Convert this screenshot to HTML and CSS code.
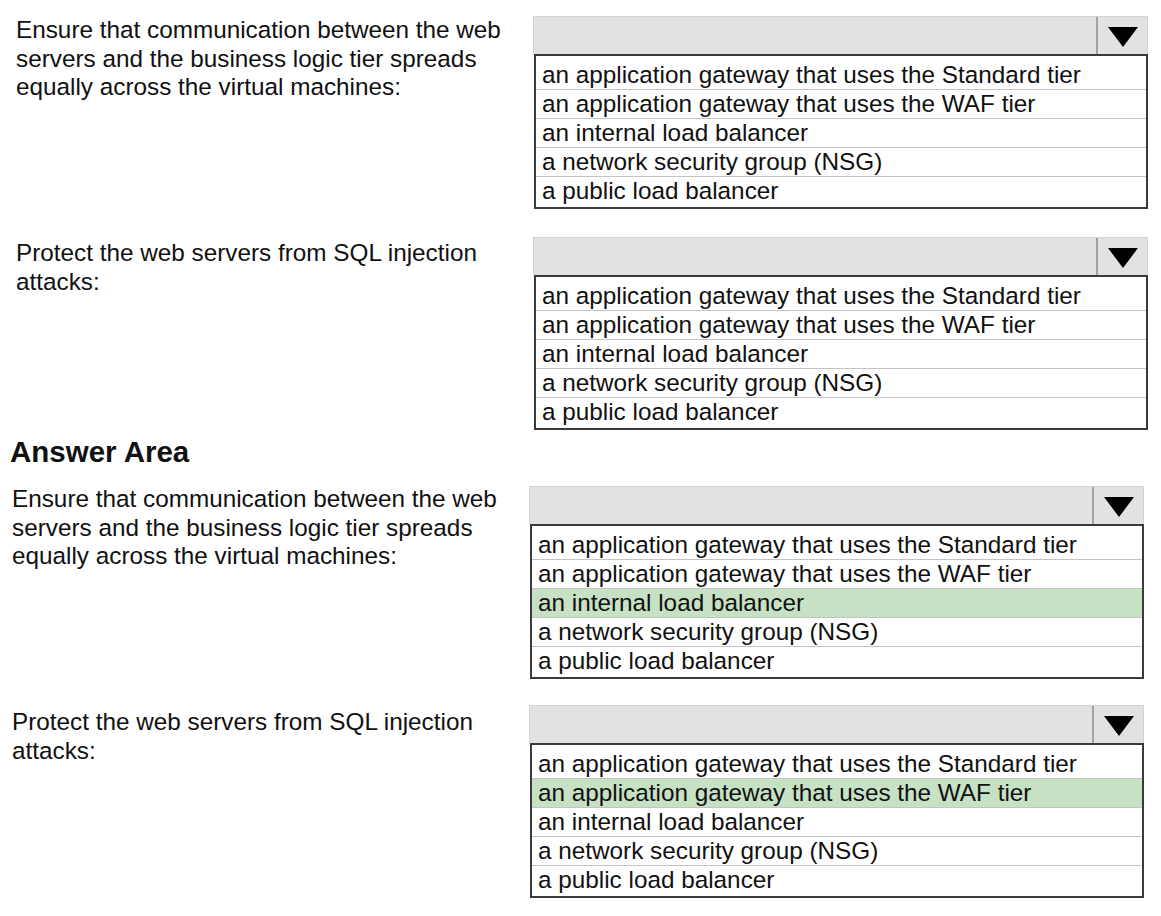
FILE: index.html
```html
<!DOCTYPE html>
<html lang="en">
<head>
<meta charset="utf-8">
<title>Answer Area</title>
<link rel="stylesheet" href="styles.css">
</head>
<body>
<main class="page">
  <section class="area area-question">
    <div class="item item-first">
      <p class="prompt">Ensure that communication between the web servers and the business logic tier spreads equally across the virtual machines:</p>
      <div class="dropdown">
        <div class="select"><span class="select-value"></span><span class="select-arrow"><svg width="30" height="20" viewBox="0 0 30 20"><polygon points="0,0 30,0 15,20" fill="#000"/></svg></span></div>
        <ul class="options">
          <li class="option">an application gateway that uses the Standard tier</li>
          <li class="option">an application gateway that uses the WAF tier</li>
          <li class="option">an internal load balancer</li>
          <li class="option">a network security group (NSG)</li>
          <li class="option">a public load balancer</li>
        </ul>
      </div>
    </div>
    <div class="item item-second">
      <p class="prompt">Protect the web servers from SQL injection attacks:</p>
      <div class="dropdown">
        <div class="select"><span class="select-value"></span><span class="select-arrow"><svg width="30" height="20" viewBox="0 0 30 20"><polygon points="0,0 30,0 15,20" fill="#000"/></svg></span></div>
        <ul class="options">
          <li class="option">an application gateway that uses the Standard tier</li>
          <li class="option">an application gateway that uses the WAF tier</li>
          <li class="option">an internal load balancer</li>
          <li class="option">a network security group (NSG)</li>
          <li class="option">a public load balancer</li>
        </ul>
      </div>
    </div>
  </section>

  <section class="area area-answer">
    <h2 class="heading">Answer Area</h2>
    <div class="item item-first">
      <p class="prompt">Ensure that communication between the web servers and the business logic tier spreads equally across the virtual machines:</p>
      <div class="dropdown">
        <div class="select"><span class="select-value"></span><span class="select-arrow"><svg width="30" height="20" viewBox="0 0 30 20"><polygon points="0,0 30,0 15,20" fill="#000"/></svg></span></div>
        <ul class="options">
          <li class="option">an application gateway that uses the Standard tier</li>
          <li class="option">an application gateway that uses the WAF tier</li>
          <li class="option selected">an internal load balancer</li>
          <li class="option">a network security group (NSG)</li>
          <li class="option">a public load balancer</li>
        </ul>
      </div>
    </div>
    <div class="item item-second">
      <p class="prompt">Protect the web servers from SQL injection attacks:</p>
      <div class="dropdown">
        <div class="select"><span class="select-value"></span><span class="select-arrow"><svg width="30" height="20" viewBox="0 0 30 20"><polygon points="0,0 30,0 15,20" fill="#000"/></svg></span></div>
        <ul class="options">
          <li class="option">an application gateway that uses the Standard tier</li>
          <li class="option selected">an application gateway that uses the WAF tier</li>
          <li class="option">an internal load balancer</li>
          <li class="option">a network security group (NSG)</li>
          <li class="option">a public load balancer</li>
        </ul>
      </div>
    </div>
  </section>
</main>
</body>
</html>
```

FILE: styles.css
```css
* {
  box-sizing: border-box;
}

html, body {
  margin: 0;
  padding: 0;
  background: #ffffff;
}

body {
  font-family: "Liberation Sans", Arial, sans-serif;
  color: #111111;
  width: 1161px;
  height: 916px;
  overflow: hidden;
}

.page {
  padding: 16px 0 0 12px;
  display: flex;
  flex-direction: column;
}

.area {
  display: flex;
  flex-direction: column;
}

.area-question {
  padding-left: 4px;
}

.item {
  display: flex;
  align-items: flex-start;
  margin-top: 26px;
}

.area-question .item {
  margin-top: 28px;
}

.area-question .item-first,
.item-first {
  margin-top: 0;
}

.area-answer .item-first {
  margin-top: 18px;
}

.area-question .item-second .prompt {
  margin-top: 2px;
}

.area-answer .item-first .prompt {
  margin-top: -1px;
}

.area-answer .item-second .prompt {
  margin-top: 3px;
}

.heading {
  margin: 6px 0 0 -2px;
  font-size: 29.5px;
  line-height: 32px;
  font-weight: bold;
  color: #111111;
}

.prompt {
  margin: 0;
  width: 517px;
  padding-right: 14px;
  font-size: 24.3px;
  line-height: 28.5px;
  color: #111111;
}

.dropdown {
  width: 615px;
  display: flex;
  flex-direction: column;
}

.select {
  height: 38px;
  display: flex;
  background: #e2e2e2;
  border: 1px solid #d3d3d3;
  border-bottom: none;
}

.select-value {
  flex: 1;
}

.select-arrow {
  width: 51px;
  border-left: 2px solid #a2a2a2;
  display: flex;
  align-items: center;
  justify-content: center;
  padding-top: 2px;
}

.select-arrow svg {
  display: block;
}

.options {
  list-style: none;
  margin: 0 0 0 1px;
  padding: 5px 0 2px 0;
  border: 2px solid #3a3a3a;
  background: #ffffff;
}

.option {
  height: 29px;
  line-height: 28px;
  padding-left: 6px;
  font-size: 24.3px;
  color: #111111;
  border-bottom: 1px solid #c4c4c4;
  white-space: nowrap;
}

.option:last-child {
  border-bottom: none;
  height: 28px;
}

.option.selected {
  background: #c6e1c4;
}
```
